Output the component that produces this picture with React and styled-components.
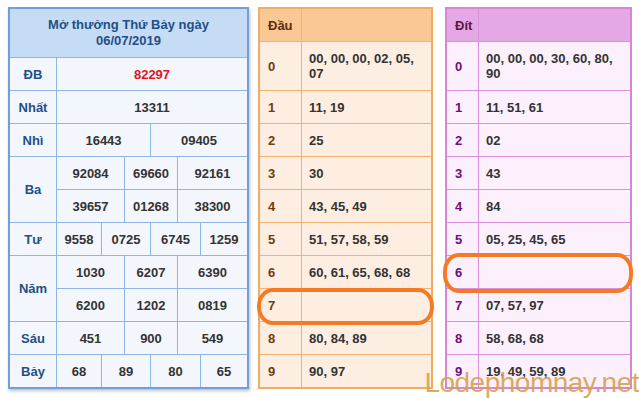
import React from 'react'
import styled, { createGlobalStyle } from 'styled-components'

const GlobalStyle = createGlobalStyle`
  body {
    margin: 0;
    background: #fff;
    font-family: 'Liberation Sans', Arial, sans-serif;
  }
`

const Page = styled.div`
  position: relative;
  width: 639px;
  height: 398px;
  overflow: hidden;
  display: flex;
  align-items: flex-start;
  padding: 7px 0 0 8px;
  box-sizing: border-box;
`

const ResultGrid = styled.div`
  display: grid;
  grid-template-columns: 46px 44px 22px 25px 26px 22px 46px;
  grid-template-rows: 48px repeat(10, 32px);
  gap: 1px;
  background: #8fb5e6;
  border: 2px solid #6f9fdc;
  box-shadow: 1px 2px 3px rgba(0, 0, 0, 0.25);
  font-size: 13px;
  font-weight: bold;
`

const ResultHead = styled.div`
  grid-column: 1 / -1;
  background: #c6dcf5;
  color: #1f4f86;
  display: flex;
  align-items: center;
  justify-content: center;
  text-align: center;
  line-height: 16px;
`

const Label = styled.div`
  grid-column: 1;
  grid-row: ${p => p.$span ? `span ${p.$span}` : 'auto'};
  background: #f3f7fd;
  color: #1f4f86;
  display: flex;
  align-items: center;
  justify-content: center;
`

const Num = styled.div`
  grid-column: ${p => p.$col};
  background: #f3f7fd;
  color: ${p => p.$red ? '#e0141e' : '#333'};
  display: flex;
  align-items: center;
  justify-content: center;
`

const themes = {
  dau: { line: '#f2b36f', outer: '#f0ac62', head: '#f9c895', cell: '#fdeee1', label: '#6e3d12', title: '#5a2e0e' },
  dit: { line: '#da90da', outer: '#d686d6', head: '#e4a8e4', cell: '#fcf0fc', label: '#6a0f7c', title: '#5c1838' },
}

const StatGrid = styled.div`
  display: grid;
  grid-template-columns: ${p => p.$label}px ${p => p.$value}px;
  grid-template-rows: 32px 48px repeat(9, 32px);
  gap: 1px;
  background: ${p => themes[p.$kind].line};
  border: 2px solid ${p => themes[p.$kind].outer};
  margin-left: ${p => p.$gap}px;
  font-size: 13px;
  font-weight: bold;
`

const StatHead = styled.div`
  background: ${p => themes[p.$kind].head};
  color: ${p => themes[p.$kind].title};
  display: flex;
  align-items: center;
  padding-left: 8px;
`

const StatKey = styled.div`
  background: ${p => themes[p.$kind].cell};
  color: ${p => themes[p.$kind].label};
  display: flex;
  align-items: center;
  padding-left: 8px;
`

const StatVal = styled.div`
  background: ${p => themes[p.$kind].cell};
  color: #333;
  display: flex;
  align-items: center;
  padding: 0 8px 0 7px;
  line-height: 15px;
`

const Marker = styled.div`
  position: absolute;
  left: ${p => p.$x}px;
  top: ${p => p.$y}px;
  width: ${p => p.$w}px;
  height: ${p => p.$h}px;
  border: 4px solid #f47b24;
  border-radius: 16px / 18px;
  box-sizing: border-box;
`

const Watermark = styled.div`
  position: absolute;
  right: 0;
  bottom: 0;
  font-family: 'Liberation Sans', Arial, sans-serif;
  font-size: 28px;
  line-height: 30px;
  color: rgba(214, 160, 80, 0.9);
  letter-spacing: -0.5px;
`

const dau = [
  '00, 00, 00, 02, 05, 07', '11, 19', '25', '30', '43, 45, 49',
  '51, 57, 58, 59', '60, 61, 65, 68, 68', '', '80, 84, 89', '90, 97',
]

const dit = [
  '00, 00, 00, 30, 60, 80, 90', '11, 51, 61', '02', '43', '84',
  '05, 25, 45, 65', '', '07, 57, 97', '58, 68, 68', '19, 49, 59, 89',
]

function Stats({ kind, title, rows, label, value, gap }) {
  return (
    <StatGrid $kind={kind} $label={label} $value={value} $gap={gap}>
      <StatHead $kind={kind}>{title}</StatHead>
      <StatHead $kind={kind} />
      {rows.map((r, i) => (
        <React.Fragment key={i}>
          <StatKey $kind={kind}>{i}</StatKey>
          <StatVal $kind={kind}>{r}</StatVal>
        </React.Fragment>
      ))}
    </StatGrid>
  )
}

export default function App() {
  return (
    <>
      <GlobalStyle />
      <Page>
        <ResultGrid>
          <ResultHead>Mở thưởng Thứ Bảy ngày<br />06/07/2019</ResultHead>

          <Label>ĐB</Label>
          <Num $col="2 / 8" $red>82297</Num>

          <Label>Nhất</Label>
          <Num $col="2 / 8">13311</Num>

          <Label>Nhì</Label>
          <Num $col="2 / 5">16443</Num>
          <Num $col="5 / 8">09405</Num>

          <Label $span={2}>Ba</Label>
          <Num $col="2 / 4">92084</Num>
          <Num $col="4 / 6">69660</Num>
          <Num $col="6 / 8">92161</Num>
          <Num $col="2 / 4">39657</Num>
          <Num $col="4 / 6">01268</Num>
          <Num $col="6 / 8">38300</Num>

          <Label>Tư</Label>
          <Num $col="2">9558</Num>
          <Num $col="3 / 5">0725</Num>
          <Num $col="5 / 7">6745</Num>
          <Num $col="7">1259</Num>

          <Label $span={2}>Năm</Label>
          <Num $col="2 / 4">1030</Num>
          <Num $col="4 / 6">6207</Num>
          <Num $col="6 / 8">6390</Num>
          <Num $col="2 / 4">6200</Num>
          <Num $col="4 / 6">1202</Num>
          <Num $col="6 / 8">0819</Num>

          <Label>Sáu</Label>
          <Num $col="2 / 4">451</Num>
          <Num $col="4 / 6">900</Num>
          <Num $col="6 / 8">549</Num>

          <Label>Bảy</Label>
          <Num $col="2">68</Num>
          <Num $col="3 / 5">89</Num>
          <Num $col="5 / 7">80</Num>
          <Num $col="7">65</Num>
        </ResultGrid>

        <Stats kind="dau" title="Đầu" rows={dau} label={41} value={129} gap={9} />
        <Stats kind="dit" title="Đít" rows={dit} label={31} value={151} gap={12} />

        <Marker $x={257} $y={288} $w={177} $h={37} />
        <Marker $x={443} $y={253} $w={190} $h={40} />
        <Watermark>Lodephomnay.net</Watermark>
      </Page>
    </>
  )
}
